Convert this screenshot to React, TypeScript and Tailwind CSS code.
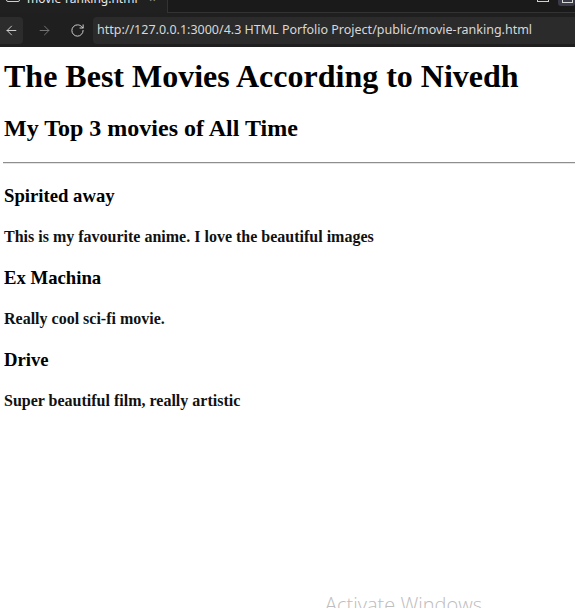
import React from 'react';
import { ArrowLeft, ArrowRight, RotateCw } from 'lucide-react';

const movies = [
  { title: 'Spirited away', note: 'This is my favourite anime. I love the beautiful images' },
  { title: 'Ex Machina', note: 'Really cool sci-fi movie.' },
  { title: 'Drive', note: 'Super beautiful film, really artistic' },
];

function BrowserChrome() {
  return (
    <div className="font-['Noto_Sans',sans-serif]">
      {/* tab strip, cut off at the top */}
      <div className="flex h-[13px] bg-[#1b1b1b] overflow-hidden">
        <div className="relative w-[167px] bg-[#202020]">
          <div className="absolute left-[6px] top-[-10px] h-[12px] w-[14px] rounded-[2px] border border-[#cfcfcf]" />
          <span className="absolute left-[27px] top-[-9px] text-[12px] leading-[16px] text-[#e8e8e8]">movie-ranking.html</span>
          <span className="absolute left-[149px] top-[-9px] text-[12px] leading-[16px] text-[#9a9a9a]">×</span>
        </div>
        <div className="relative flex-1 border-l border-b border-[#333] bg-[#1a1a1a]">
          <div className="absolute left-[369px] top-[-8px] h-[10px] w-[12px] border border-[#cfcfcf]" />
          <div className="absolute right-0 top-[-6px] h-[12px] w-[17px] rounded-[3px] bg-[#3a3a48]">
            <div className="ml-[4px] mt-[2px] h-[7px] w-[11px] border border-[#d8d8d8]" />
          </div>
        </div>
      </div>
      {/* toolbar */}
      <div className="flex h-[34px] items-center bg-[#1f1f1f]">
        <div className="flex h-[27px] w-[23px] items-center justify-center rounded-r-[4px] bg-[#2c2c2c]">
          <ArrowLeft className="h-[15px] w-[15px] text-[#d6d6d6]" strokeWidth={1.5} />
        </div>
        <div className="ml-[13px] flex w-[16px] justify-center">
          <ArrowRight className="h-[15px] w-[15px] text-[#7a7a7a]" strokeWidth={1.5} />
        </div>
        <div className="ml-[17px] flex w-[16px] justify-center">
          <RotateCw className="h-[15px] w-[15px] text-[#d0d0d0]" strokeWidth={1.6} />
        </div>
        <div className="ml-[8px] flex h-[27px] flex-1 items-center rounded-l-[4px] bg-[#2b2b2b] pl-[4px]">
          <span className="whitespace-nowrap text-[12.5px] text-[#d8d8d8]">
            http://127.0.0.1:3000/4.3 HTML Porfolio Project/public/movie-ranking.html
          </span>
        </div>
      </div>
    </div>
  );
}

export default function App() {
  return (
    <div className="relative h-[608px] w-[575px] overflow-hidden bg-white">
      <BrowserChrome />
      <div className="pl-[4px] font-['Liberation_Serif','Times_New_Roman',serif] font-bold text-black">
        <h1 className="mt-[11px] text-[32px] leading-[36px]">The Best Movies According to Nivedh</h1>
        <h2 className="mt-[21px] text-[24px] leading-[27px]">My Top 3 movies of All Time</h2>
        <div className="-ml-[1px] mt-[20px] h-[2px] border-t border-b border-t-[#8e8e8e] border-b-[#e4e4e4]" />
        {movies.map((m) => (
          <div key={m.title}>
            <h3 className="mt-[21px] text-[18.72px] leading-[21px]">{m.title}</h3>
            <h4 className="mt-[22px] text-[16px] leading-[18px] text-[#111]">{m.note}</h4>
          </div>
        ))}
      </div>
      <div className="absolute left-[325px] top-[590px] font-['Open_Sans',sans-serif] text-[20px] font-light text-[#bdbdbd]">
        Activate Windows
      </div>
    </div>
  );
}
